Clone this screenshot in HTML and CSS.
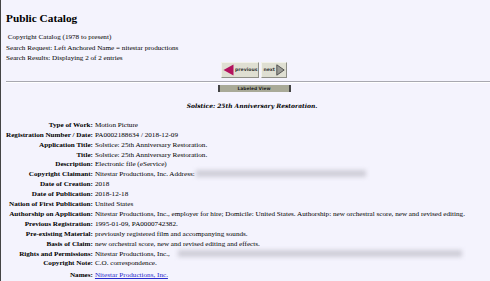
FILE: index.html
```html
<!DOCTYPE html>
<html lang="en">
<head>
    <meta charset="UTF-8">
    <title>Public Catalog</title>
    <link rel="stylesheet" href="styles.css">
</head>
<body>
<div class="page">
    <h1>Public Catalog</h1>
    <div class="search-info">
        <div>&nbsp;Copyright Catalog (1978 to present)</div>
        <div>Search Request: Left Anchored Name = nitestar productions</div>
        <div>Search Results: Displaying 2 of 2 entries</div>
    </div>

    <div class="nav-buttons">
        <span class="nav-btn">
            <svg width="11" height="12" viewBox="0 0 11 12"><polygon points="10.5,0.5 0.5,6 10.5,11.5" fill="#b3125e"/></svg>
            <span>previous</span>
        </span>
        <span class="nav-btn">
            <span>next</span>
            <svg width="9" height="12" viewBox="0 0 9 12"><polygon points="0.8,0.8 8.2,6 0.8,11.2" fill="#9a9a94" stroke="#4a4a4a" stroke-width="0.9"/></svg>
        </span>
    </div>

    <hr>

    <div class="view-tab">Labeled View</div>

    <div class="record-title">Solstice: 25th Anniversary Restoration.</div>

    <table class="record">
        <tr><th>Type of Work:</th><td>Motion Picture</td></tr>
        <tr><th>Registration Number / Date:</th><td>PA0002188634 / 2018-12-09</td></tr>
        <tr><th>Application Title:</th><td>Solstice: 25th Anniversary Restoration.</td></tr>
        <tr><th>Title:</th><td>Solstice: 25th Anniversary Restoration.</td></tr>
        <tr><th>Description:</th><td>Electronic file (eService)</td></tr>
        <tr><th>Copyright Claimant:</th><td>Nitestar Productions, Inc. Address: <span class="redacted addr"></span></td></tr>
        <tr><th>Date of Creation:</th><td>2018</td></tr>
        <tr><th>Date of Publication:</th><td>2018-12-18</td></tr>
        <tr><th>Nation of First Publication:</th><td>United States</td></tr>
        <tr><th>Authorship on Application:</th><td>Nitestar Productions, Inc., employer for hire; Domicile: United States. Authorship: new orchestral score, new and revised editing.</td></tr>
        <tr><th>Previous Registration:</th><td>1995-01-09, PA0000742382.</td></tr>
        <tr><th>Pre-existing Material:</th><td>previously registered film and accompanying sounds.</td></tr>
        <tr><th>Basis of Claim:</th><td>new orchestral score, new and revised editing and effects.</td></tr>
        <tr><th>Rights and Permissions:</th><td>Nitestar Productions, Inc., <span class="redacted rights"></span></td></tr>
        <tr><th>Copyright Note:</th><td>C.O. correspondence.</td></tr>
        <tr class="names-row"><th>Names:</th><td><a href="#">Nitestar Productions, Inc.</a></td></tr>
    </table>
</div>
</body>
</html>
```

FILE: styles.css
```css
html, body {
    margin: 0;
    padding: 0;
}
body {
    background-color: #f4f3fd;
    color: #000;
    font-family: "Liberation Serif", "Times New Roman", serif;
    font-size: 7.15px;
    overflow: hidden;
}
.page {
    border-left: 1px solid #444;
    height: 281px;
    padding: 0 0 0 5px;
    box-sizing: border-box;
}
h1 {
    font-size: 11.3px;
    margin: 0;
    padding-top: 11px;
    line-height: 14px;
}
.search-info {
    margin-top: 7px;
    line-height: 10.6px;
}
.nav-buttons {
    display: flex;
    justify-content: center;
    gap: 2px;
    margin-top: -2px;
    padding-left: 12px;
}
.nav-btn {
    display: flex;
    align-items: center;
    gap: 1px;
    height: 14px;
    padding: 0 1px;
    background-color: #dfdfd2;
    border: 1px solid #8e8e86;
    border-top-color: #f2f2ea;
    border-left-color: #f2f2ea;
    font-family: "DejaVu Sans", sans-serif;
    font-weight: bold;
    font-size: 4.6px;
    color: #333;
}
hr {
    margin: 3px 0 0 0;
    border: 0;
    border-top: 1px solid #a8a8b0;
    border-bottom: 1px solid #fff;
}
.view-tab {
    width: 69px;
    margin: 2px auto 0;
    position: relative;
    left: 6px;
    background-color: #a9aa98;
    border-left: 2px solid #444;
    border-right: 2px solid #444;
    font-family: "DejaVu Sans", sans-serif;
    font-weight: bold;
    font-size: 4.4px;
    line-height: 7px;
    text-align: center;
    color: #222;
}
.record-title {
    text-align: center;
    margin-top: 10px;
    padding-left: 8px;
    font-family: "DejaVu Serif", serif;
    font-style: italic;
    font-weight: bold;
    font-size: 5.95px;
    line-height: 8px;
}
.record {
    margin-top: 11px;
    border-collapse: collapse;
}
.record th {
    text-align: right;
    white-space: nowrap;
    padding: 0 2px 0 0;
    line-height: 9.9px;
    vertical-align: top;
}
.record td {
    padding: 0;
    line-height: 9.9px;
    white-space: nowrap;
}
.redacted {
    display: inline-block;
    height: 7px;
    vertical-align: -1px;
    background-color: #cfced8;
    filter: blur(2px);
}
.redacted.addr {
    width: 170px;
}
.redacted.rights {
    width: 284px;
    margin-left: 6px;
}
.names-row th, .names-row td {
    padding-top: 2px;
}
a {
    color: #2a2acc;
}
```
